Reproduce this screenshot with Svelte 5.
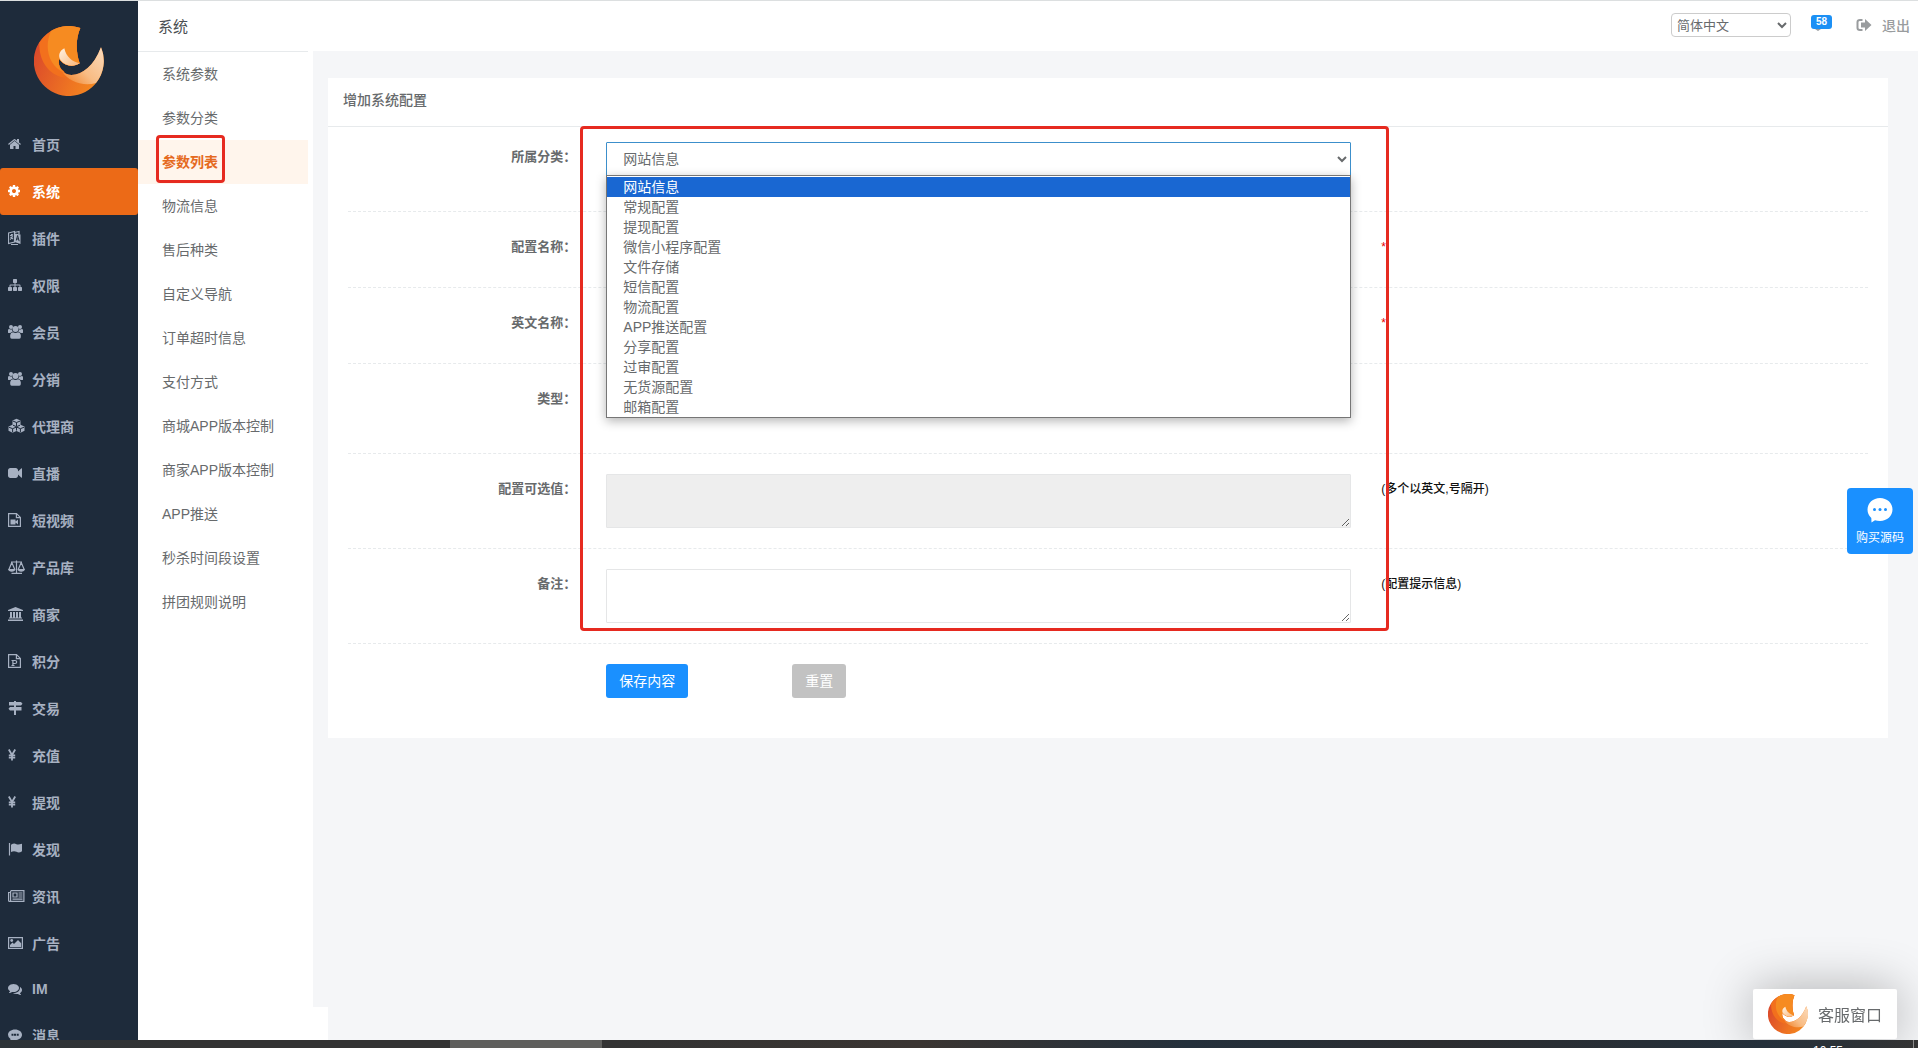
<script lang="ts">
  interface NavItem {
    icon: string;
    label: string;
  }

  const navItems: NavItem[] = [
    { icon: 'home', label: '首页' },
    { icon: 'cog', label: '系统' },
    { icon: 'language', label: '插件' },
    { icon: 'sitemap', label: '权限' },
    { icon: 'users', label: '会员' },
    { icon: 'users', label: '分销' },
    { icon: 'cubes', label: '代理商' },
    { icon: 'video', label: '直播' },
    { icon: 'fileVideo', label: '短视频' },
    { icon: 'balance', label: '产品库' },
    { icon: 'bank', label: '商家' },
    { icon: 'filePoint', label: '积分' },
    { icon: 'signs', label: '交易' },
    { icon: 'yen', label: '充值' },
    { icon: 'yen', label: '提现' },
    { icon: 'flag', label: '发现' },
    { icon: 'news', label: '资讯' },
    { icon: 'image', label: '广告' },
    { icon: 'comments', label: 'IM' },
    { icon: 'comment', label: '消息' }
  ];

  const subItems = [
    '系统参数',
    '参数分类',
    '参数列表',
    '物流信息',
    '售后种类',
    '自定义导航',
    '订单超时信息',
    '支付方式',
    '商城APP版本控制',
    '商家APP版本控制',
    'APP推送',
    '秒杀时间段设置',
    '拼团规则说明'
  ];

  const categories = [
    '网站信息',
    '常规配置',
    '提现配置',
    '微信小程序配置',
    '文件存储',
    '短信配置',
    '物流配置',
    'APP推送配置',
    '分享配置',
    '过审配置',
    '无货源配置',
    '邮箱配置'
  ];

  let activeNav = $state('系统');
  let activeSub = $state('参数列表');
  let category = $state('网站信息');
  let open = $state(true);

  function pick(name: string) {
    category = name;
    open = false;
  }
</script>

{#snippet logo(id: string)}
  <svg class="logo" viewBox="0 0 210 210" aria-hidden="true">
    <defs>
      <linearGradient id="{id}-base" x1="0" y1="0.4" x2="1" y2="0.8">
        <stop offset="0" stop-color="#db4a2b" />
        <stop offset="0.6" stop-color="#ee7422" />
        <stop offset="1" stop-color="#f68d1f" />
      </linearGradient>
      <linearGradient id="{id}-tail" x1="1" y1="0.1" x2="0.1" y2="0.9">
        <stop offset="0" stop-color="#fbd9b8" />
        <stop offset="0.6" stop-color="#f8bc84" />
        <stop offset="1" stop-color="#f28a35" />
      </linearGradient>
      <linearGradient id="{id}-inner" x1="0" y1="0" x2="1" y2="1">
        <stop offset="0" stop-color="#fff3e4" />
        <stop offset="1" stop-color="#f9b577" />
      </linearGradient>
    </defs>
    <path fill="url(#{id}-base)" d="M139 6A105 105 0 1 0 201 64C180 120 145 147 112 147C88 145 70 125 76 98C88 120 118 125 137 112C126 80 124 40 139 6Z" />
    <path fill="#f2701d" d="M139 6A105 105 0 0 0 16 50C14 110 50 152 98 156L90 136C74 126 72 110 76 98C88 120 118 125 137 112C126 80 124 40 139 6Z" />
    <path fill="#f68b21" d="M139 6A105 105 0 0 0 51 15C30 62 42 118 90 140C74 126 72 110 76 98C88 120 118 125 137 112C126 80 124 40 139 6Z" />
    <path fill="url(#{id}-tail)" d="M201 64A105 105 0 0 1 186 171C148 182 104 168 84 136C92 144 101 147 112 147C145 147 180 120 201 64Z" />
    <path fill="url(#{id}-inner)" d="M91 67C74 76 72 92 80 103C92 120 118 125 137 112C115 107 97 94 91 67Z" />
  </svg>
{/snippet}

{#snippet icon(name: string)}
  {#if name === 'home'}
    <svg class="icon" viewBox="64 -128 2304 2048"><path d="M1472 992v480q0 26-19 45t-45 19h-384v-384h-256v384h-384q-26 0-45-19t-19-45v-480q0-1 .5-3t.5-3l575-474 575 474q1 2 1 6zm223-69l-62 74q-8 9-21 11h-3q-13 0-21-7l-692-577-692 577q-12 8-24 7-13-2-21-11l-62-74q-8-10-7-23.500t11-21.500l719-599q32-26 76-26t76 26l244 204v-195q0-14 9-23t23-9h192q14 0 23 9t9 23v408l219 182q10 8 11 21.500t-7 23.500z" /></svg>
  {:else if name === 'cog'}
    <svg class="icon" viewBox="128 -128 2304 2048"><path d="M1152 896q0-106-75-181t-181-75-181 75-75 181 75 181 181 75 181-75 75-181zm512-109v222q0 12-8 23t-20 13l-185 28q-19 54-39 91 35 50 107 138 10 12 10 25t-9 23q-27 37-99 108t-94 71q-12 0-26-9l-138-108q-44 23-91 38-16 136-29 186-7 28-36 28h-222q-14 0-24.500-8.500t-11.500-21.500l-28-184q-49-16-90-37l-141 107q-10 9-25 9-14 0-25-11-126-114-165-168-7-10-7-23 0-12 8-23 15-21 51-66.500t54-70.500q-27-50-41-99l-183-27q-13-2-21-12.500t-8-23.500v-222q0-12 8-23t19-13l186-28q14-46 39-92-40-57-107-138-10-12-10-24 0-10 9-23 26-36 98.500-107.500t94.500-71.500q13 0 26 10l138 107q44-23 91-38 16-136 29-186 7-28 36-28h222q14 0 24.500 8.500t11.500 21.500l28 184q49 16 90 37l142-107q9-9 24-9 13 0 25 10 129 119 165 170 7 8 7 22 0 12-8 23-15 21-51 66.500t-54 70.500q26 50 41 98l183 28q13 2 21 12.500t8 23.500z" /></svg>
  {:else if name === 'language'}
    <svg class="icon" viewBox="0 0 18 16">
      <path d="M6.500 3.500L12.500 4.500v9.500L6.500 12z" />
      <path class="line" d="M.5 3L6.500 1.500v10.500L.5 13.500zM2 5.500l3-1M3.500 4v2M2 9.500c1.500-1 2.500-2.500 2.500-4M2.500 7l2.500 2M6.500 2.500L11 1.500v2.500M3 14.500h7" />
      <path class="cut" d="M8.300 10.500l1.300-5 1.600 5.700M8.700 8.800l2 .4" />
    </svg>
  {:else if name === 'sitemap'}
    <svg class="icon" viewBox="0 -128 2304 2048"><path d="M1792 1248v320q0 40-28 68t-68 28h-320q-40 0-68-28t-28-68v-320q0-40 28-68t68-28h96v-192h-512v192h96q40 0 68 28t28 68v320q0 40-28 68t-68 28h-320q-40 0-68-28t-28-68v-320q0-40 28-68t68-28h96v-192h-512v192h96q40 0 68 28t28 68v320q0 40-28 68t-68 28h-320q-40 0-68-28t-28-68v-320q0-40 28-68t68-28h96v-192q0-52 38-90t90-38h512v-192h-96q-40 0-68-28t-28-68v-320q0-40 28-68t68-28h320q40 0 68 28t28 68v320q0 40-28 68t-68 28h-96v192h512q52 0 90 38t38 90v192h96q40 0 68 28t28 68z" /></svg>
  {:else if name === 'users'}
    <svg class="icon" viewBox="0 0 18 16">
      <circle cx="3" cy="3" r="2" /><circle cx="12" cy="3" r="2" /><circle cx="7.500" cy="5" r="3" />
      <path d="M0 8.500V6.300Q0 5 1.200 5Q3 5.800 3.900 5.500Q4 7 4.800 7.800Q3 8 2.300 9H1Q0 9 0 8.500zM15 8.500V6.300Q15 5 13.800 5Q12 5.800 11.100 5.500Q11 7 10.200 7.800Q12 8 12.700 9H14Q15 9 15 8.500zM2.200 13.200V11Q2.600 8.300 5 8.300Q7.500 9.800 10 8.300Q12.400 8.300 12.800 11V13.200Q12.500 14.800 11 14.800H4Q2.500 14.800 2.200 13.200z" />
    </svg>
  {:else if name === 'cubes'}
    <svg class="icon" viewBox="0 0 18 16">
      <path d="M8.500.8l4 1.600v4.400l4 1.700v4.300l-4 2-4-1.900-4 1.900-4-2V8.500l4-1.700V2.400z" />
      <path class="cut" d="M4.800 3l3.700 1.500L12.300 3M8.500 4.500v3.800M.9 9.200l3.700 1.500 3.900-1.700 3.900 1.700 3.700-1.500M4.600 10.700v3.600M12.400 10.700v3.600M8.500 9v3.500M5 7.200l3.500 1.500L12 7.200" />
    </svg>
  {:else if name === 'video'}
    <svg class="icon" viewBox="0 -128 2304 2048"><path d="M1792 352v1088q0 42-39 59-13 5-25 5-27 0-45-19l-403-403v166q0 119-84.500 203.500t-203.500 84.500h-704q-119 0-203.500-84.500t-84.500-203.500v-704q0-119 84.500-203.500t203.500-84.500h704q119 0 203.500 84.500t84.500 203.500v165l403-402q18-19 45-19 12 0 25 5 39 17 39 59z" /></svg>
  {:else if name === 'fileVideo'}
    <svg class="icon" viewBox="0 0 18 16">
      <path class="line" d="M.6 1.600h7.900l3.900 3.800v9H.6zM8.400 1.600v4h4" />
      <path d="M2.500 7.500h5v2l2.500-2v5l-2.500-2v2h-5z" />
    </svg>
  {:else if name === 'balance'}
    <svg class="icon" viewBox="0 0 18 16">
      <path class="line" d="M3 3h11M8.500 1.500v12.800M3.500 14.400h10.500M3.800 3.500L.9 10.500M3.800 3.500l3 7M13.200 3.500l-3 7M13.200 3.500l3 7" />
      <path d="M0 10h7.500Q7 12.700 3.800 12.700Q.5 12.700 0 10zM9.500 10H17Q16.500 12.700 13.200 12.700Q10 12.700 9.500 10z" />
    </svg>
  {:else if name === 'bank'}
    <svg class="icon" viewBox="0 0 18 16"><path d="M7.500 1L15 4v1H0V4zM2 6h2v5.500h1V6h2v5.500h1V6h2v5.500h1V6h2v5.500h1v1H1v-1h1zM0 13.500h15V15H0z" /></svg>
  {:else if name === 'filePoint'}
    <svg class="icon" viewBox="0 0 18 16">
      <path class="line" d="M.6 1.600h7.900l3.900 3.800v9H.6zM8.400 1.600v4h4M3.500 7.500h3.500Q8.700 7.500 8.700 9T7 10.500H5M4.900 7.500v5M3.500 12.500h3" />
    </svg>
  {:else if name === 'signs'}
    <svg class="icon" viewBox="0 0 18 16"><path d="M6 1h2v1h5l1.500 1.800L13 5.500H8V7h5.500v3.500H8V15H6v-4.500H2L.5 8.700 2 7h4V5.500H1V2h5z" /></svg>
  {:else if name === 'yen'}
    <svg class="icon" viewBox="0 0 18 16"><path class="thick" d="M.8 2.500l3.200 5.500 3.200-5.500M4 8v5.500M.8 8.300h6.400M.8 10.700h6.400" /></svg>
  {:else if name === 'flag'}
    <svg class="icon" viewBox="0 0 18 16">
      <path class="line" d="M1.500 2v12.500" />
      <path d="M3 3.800Q6 1.800 8 3T14 2.700v7.500Q11 12.200 8.500 10.800T3 11z" />
    </svg>
  {:else if name === 'news'}
    <svg class="icon" viewBox="0 0 18 16">
      <path class="line" d="M2.600 2.600h13.300v10.800H1.600q-1 0-1-1.200V4.500h2M2.600 3v10M5 5h4v4H5zM10.500 5h4M10.500 7h4M10.500 9h4M4.500 11.200h10" />
    </svg>
  {:else if name === 'image'}
    <svg class="icon" viewBox="0 0 18 16">
      <path class="line" d="M.6 2.600h13.800v10.800H.6z" />
      <circle cx="3.700" cy="5.500" r="1.400" />
      <path d="M2 12V10l2.500-2.500L6 9l4-4 3.200 3.300V12z" />
    </svg>
  {:else if name === 'comments'}
    <svg class="icon" viewBox="0 -128 2304 2048"><path d="M1408 768q0 139-94 257t-256.500 186.500-353.500 68.500q-86 0-176-16-124 88-278 128-36 9-86 16h-3q-11 0-20.500-8t-11.500-21q-1-3-1-6.500t.5-6.500 2-6l2.500-5 3.500-5.500 4-5 4.500-5 4-4.500q5-6 23-25t26-29.500 22.500-29 25-38.500 20.500-44q-124-72-195-177t-71-224q0-139 94-257t256.500-186.500 353.500-68.500 353.500 68.500 256.500 186.500 94 257zm384 256q0 120-71 224.500t-195 176.500q10 24 20.500 44t25 38.500 22.500 29 26 29.500 23 25q1 1 4 4.500t4.500 5 4 5 3.500 5.500l2.500 5 2 6 .5 6.500-1 6.500q-3 14-13 22t-22 7q-50-7-86-16-154-40-278-128-90 16-176 16-271 0-472-132 58 4 88 4 161 0 309-45t264-129q125-92 192-212t67-254q0-77-23-152 129 71 204 178t75 230z" /></svg>
  {:else if name === 'comment'}
    <svg class="icon" viewBox="0 0 18 16">
      <path fill-rule="evenodd" d="M7 2.500c4 0 7 2.300 7 5.300s-3 5.300-7 5.300q-.8 0-1.500-.1Q3.500 14.600 1 15q1.300-1.300 1.500-3Q0 10.500 0 7.800c0-3 3-5.300 7-5.300zM3.500 6.800v2h2v-2zM6 6.800v2h2v-2zM8.700 6.800v2h2v-2z" />
    </svg>
  {/if}
{/snippet}

<div class="page">
  <div class="workspace">
    <aside class="sidebar">
      <a class="brand" href="#home" aria-label="首页">{@render logo('brand')}</a>
      <nav>
        {#each navItems as item}
          <a
            class="nav-item"
            class:active={item.label === activeNav}
            class:latin={item.label === 'IM'}
            href="#nav"
            onclick={() => (activeNav = item.label)}
          >
            {@render icon(item.icon)}
            <span>{item.label}</span>
          </a>
        {/each}
      </nav>
    </aside>

    <div class="content">
      <header class="topbar">
        <h1>系统</h1>
        <div class="tools">
          <select class="lang" aria-label="语言">
            <option>简体中文</option>
            <option>English</option>
          </select>
          <a class="messages" href="#messages">58</a>
          <a class="logout" href="#logout">
            <svg viewBox="0 0 16 14" aria-hidden="true">
              <path class="door" d="M6.500 2H4Q1.500 2 1.500 4v6Q1.500 12 4 12h2.500" />
              <path d="M5 4.500h4V1l6.500 6L9 13V9.500H5z" />
            </svg>
            退出
          </a>
        </div>
      </header>

      <div class="columns">
        <div class="subpanel">
          <nav class="subnav">
            {#each subItems as item}
              <a
                class="sub-item"
                class:active={item === activeSub}
                href="#sub"
                onclick={() => (activeSub = item)}
              >
                {item}
                {#if item === '参数列表'}
                  <span class="mark mark-menu"></span>
                {/if}
              </a>
            {/each}
          </nav>
          <div class="subfoot"></div>
        </div>

        <main>
          <section class="card">
            <h2>增加系统配置</h2>
            <form onsubmit={(e) => e.preventDefault()}>
              <div class="row first">
                <label for="category">所属分类：</label>
                <div class="control picker">
                  <select
                    id="category"
                    class="field focused"
                    bind:value={category}
                    onmousedown={(e) => {
                      e.preventDefault();
                      open = !open;
                    }}
                  >
                    {#each categories as name}
                      <option>{name}</option>
                    {/each}
                  </select>
                  {#if open}
                    <div class="options" role="listbox" aria-label="所属分类">
                      {#each categories as name}
                        <button
                          type="button"
                          role="option"
                          aria-selected={name === category}
                          class="option"
                          class:selected={name === category}
                          onclick={() => pick(name)}
                        >{name}</button>
                      {/each}
                    </div>
                  {/if}
                </div>
              </div>
              <div class="row">
                <label for="name">配置名称：</label>
                <div class="control"><input id="name" class="field" type="text" /></div>
                <span class="hint required">*</span>
              </div>
              <div class="row">
                <label for="key">英文名称：</label>
                <div class="control"><input id="key" class="field" type="text" /></div>
                <span class="hint required">*</span>
              </div>
              <div class="row tall">
                <label for="type">类型：</label>
                <div class="control">
                  <select id="type" class="field short"><option></option></select>
                </div>
              </div>
              <div class="row">
                <label for="values">配置可选值：</label>
                <div class="control"><textarea id="values" disabled></textarea></div>
                <span class="hint">(多个以英文,号隔开)</span>
              </div>
              <div class="row">
                <label for="remark">备注：</label>
                <div class="control"><textarea id="remark"></textarea></div>
                <span class="hint">(配置提示信息)</span>
              </div>
              <div class="row actions">
                <div class="control buttons">
                  <button class="btn save" type="submit">保存内容</button>
                  <button class="btn reset" type="reset">重置</button>
                </div>
              </div>
              <span class="mark mark-form"></span>
            </form>
          </section>
        </main>
      </div>
    </div>
  </div>

  <button class="buy" type="button">
    <svg viewBox="0 0 26 26" aria-hidden="true">
      <path fill="#fff" d="M13 1C20 1 25.500 6 25.500 12.500S20 24 13 24q-3 0-5-.7L4.500 25.500 4.300 21Q.5 17.500.5 12.500C.5 6 6 1 13 1z" />
      <circle cx="7.500" cy="12.500" r="1.500" /><circle cx="13" cy="12.500" r="1.500" /><circle cx="18.500" cy="12.500" r="1.500" />
    </svg>
    购买源码
  </button>

  <button class="service" type="button">
    {@render logo('service')}
    客服窗口
  </button>

  <footer class="taskbar">
    <span class="task"></span>
    <time>10:55</time>
  </footer>
</div>

<style>
  :global(body) {
    margin: 0;
    background: #f5f6f8;
  }

  .page {
    display: flex;
    flex-direction: column;
    box-sizing: border-box;
    height: 100vh;
    overflow: hidden;
    border-top: 1px solid #dcdfe0;
    font-family: "Liberation Sans", "Noto Sans CJK SC", sans-serif;
    font-size: 14px;
    color: #676a6c;
  }

  .page :is(input, select, textarea, button) {
    box-sizing: border-box;
    margin: 0;
    font-family: inherit;
    color: inherit;
  }

  a {
    color: inherit;
    text-decoration: none;
  }

  .workspace {
    display: flex;
    flex: 1;
    min-height: 0;
  }

  .sidebar {
    flex: 0 0 138px;
    overflow: hidden;
    background: #1e2b3b;
    color: #a7b1c2;
  }

  .brand {
    display: flex;
    justify-content: center;
    padding: 25px 0;
  }

  .logo {
    display: block;
    flex: none;
  }

  .brand .logo {
    width: 70px;
    height: 70px;
  }

  .nav-item {
    display: flex;
    align-items: center;
    gap: 6px;
    box-sizing: border-box;
    height: 47px;
    padding: 0 0 2px 8px;
    font-weight: 600;
    border-radius: 3px;
  }

  .nav-item.latin {
    height: 45px;
  }

  .nav-item.active {
    background: #ec6a17;
    color: #fff;
  }

  .icon {
    flex: none;
    width: 18px;
    height: 16px;
    fill: currentColor;
  }

  .icon .line,
  .icon .thick {
    fill: none;
    stroke: currentColor;
    stroke-width: 1.2;
  }

  .icon .thick {
    stroke-width: 1.8;
  }

  .icon .cut {
    fill: none;
    stroke: #1e2b3b;
    stroke-width: 1;
  }

  .content {
    display: flex;
    flex-direction: column;
    flex: 1;
    min-width: 0;
  }

  .topbar {
    display: flex;
    flex: none;
    align-items: center;
    justify-content: space-between;
    box-sizing: border-box;
    height: 50px;
    padding: 0 8px 2px 20px;
    background: #fff;
  }

  h1,
  h2 {
    margin: 0;
    font-weight: 400;
  }

  h1 {
    font-size: 15px;
    color: #4b4f52;
  }

  .tools {
    display: flex;
    align-items: center;
  }

  .lang {
    width: 120px;
    height: 24px;
    padding: 0 1px;
    border: 1px solid #ccc;
    border-radius: 4px;
    background: #fff;
    font-size: 13px;
  }

  .messages {
    position: relative;
    width: 21px;
    height: 14px;
    margin: 0 24px 6px 20px;
    border-radius: 3px;
    background: #1c90f5;
    color: #fff;
    font-size: 10px;
    font-weight: 700;
    line-height: 14px;
    text-align: center;
  }

  .messages::after {
    content: '';
    position: absolute;
    left: 4px;
    top: 14px;
    border: 3px solid transparent;
    border-top: 2px solid #999c9e;
  }

  .logout {
    display: flex;
    align-items: center;
    gap: 10px;
    color: #999c9e;
    font-weight: 500;
  }

  .logout svg {
    width: 16px;
    height: 14px;
    fill: currentColor;
  }

  .logout .door {
    fill: none;
    stroke: currentColor;
    stroke-width: 2;
  }

  .columns {
    display: flex;
    flex: 1;
    min-height: 0;
  }

  .subpanel {
    display: flex;
    flex-direction: column;
    flex: 0 0 190px;
  }

  .subnav {
    flex: 1;
    width: 175px;
    background: #fff;
  }

  .subnav::before {
    content: '';
    display: block;
    width: 170px;
    border-top: 1px solid #e7eaec;
  }

  .sub-item {
    position: relative;
    display: block;
    width: 146px;
    padding-left: 24px;
    line-height: 44px;
  }

  .sub-item.active {
    background: #fff5ec;
    color: #e56a1f;
    font-weight: 600;
  }

  .subfoot {
    height: 33px;
    background: #fff;
  }

  .mark {
    position: absolute;
    border: 3px solid #e62a20;
    border-radius: 4px;
    pointer-events: none;
  }

  .mark-menu {
    left: 18px;
    top: -5px;
    width: 63px;
    height: 42px;
  }

  main {
    flex: 1;
    min-width: 0;
    padding: 27px 30px 0 0;
  }

  .card {
    background: #fff;
  }

  h2 {
    padding: 0 15px 4px;
    border-bottom: 1px solid #e7eaec;
    font-size: 14px;
    line-height: 44px;
    font-weight: 500;
  }

  form {
    position: relative;
    padding: 0 20px;
  }

  .row {
    display: grid;
    grid-template-columns: 2fr 6fr 4fr;
    position: relative;
    padding: 20px 0;
    margin: 0 -15px;
  }

  .row:not(.actions)::after {
    content: '';
    position: absolute;
    left: 15px;
    right: 15px;
    bottom: 0;
    border-bottom: 1px dashed #e7eaec;
  }

  .row:not(.actions) {
    padding-bottom: 21px;
  }

  .row.first:not(.actions) {
    padding-top: 15px;
    padding-bottom: 35px;
    z-index: 2;
  }

  .row.tall:not(.actions) {
    padding-bottom: 40px;
  }

  label {
    padding-right: 15px;
    font-size: 13px;
    font-weight: 600;
    line-height: 30px;
    text-align: right;
  }

  .control {
    display: flex;
    flex-direction: column;
    min-width: 0;
    padding: 0 15px;
  }

  .field {
    width: 100%;
    height: 35px;
    padding: 0 12px 2px;
    border: 1px solid #e5e6e7;
    border-radius: 1px;
    background: #fff;
    font-size: 14px;
  }

  .field.short {
    height: 30px;
  }

  .field.focused {
    border-color: #3c8fcb;
    outline: none;
  }

  textarea {
    width: 100%;
    height: 54px;
    border: 1px solid #e5e6e7;
    border-radius: 1px;
    background: #fff;
  }

  textarea:disabled {
    background: #eee;
  }

  .picker {
    position: relative;
    z-index: 2;
  }

  .options {
    position: absolute;
    top: 33px;
    left: 15px;
    right: 15px;
    padding-top: 1px;
    border: 1px solid #767676;
    background: #fff;
    box-shadow: 0 3px 10px rgba(0, 0, 0, 0.3);
  }

  .page .option {
    display: block;
    width: 100%;
    height: 20px;
    padding: 0 16px;
    border: 0;
    background: none;
    font-size: 14px;
    line-height: 20px;
    text-align: left;
  }

  .page .option.selected {
    background: #1967d2;
    color: #fff;
  }

  .hint {
    padding-left: 15px;
    font-size: 12px;
    font-weight: 500;
    line-height: 30px;
    color: #111;
  }

  .required {
    color: #e60000;
  }

  .row.actions {
    padding-bottom: 40px;
  }

  .buttons {
    grid-column: 2;
    flex-direction: row;
    gap: 104px;
  }

  .page .btn {
    height: 34px;
    padding: 0 13px 2px;
    border: 0;
    border-radius: 3px;
    font-size: 14px;
    color: #fff;
  }

  .save {
    background: #1a90ff;
  }

  .reset {
    background: #c2c2c2;
  }

  .mark-form {
    z-index: 3;
    top: -1px;
    bottom: 107px;
    left: calc(100% / 6 - 8px);
    right: calc(100% / 3 - 21px);
  }

  .page .buy {
    position: fixed;
    right: 5px;
    top: 488px;
    z-index: 4;
    display: flex;
    flex-direction: column;
    align-items: center;
    gap: 6px;
    width: 66px;
    height: 66px;
    padding: 9px 0 0;
    border: 0;
    border-radius: 4px;
    background: #1a90ff;
    color: #fff;
    font-size: 12px;
    line-height: 18px;
  }

  .buy svg {
    flex: none;
    width: 26px;
    height: 26px;
    fill: #1a90ff;
  }

  .page .service {
    position: fixed;
    right: 21px;
    bottom: 9px;
    z-index: 4;
    display: flex;
    align-items: center;
    gap: 10px;
    height: 50px;
    padding: 0 15px;
    border: 0;
    border-radius: 2px;
    background: #fff;
    box-shadow: 0 0 50px rgba(0, 0, 0, 0.3);
    font-size: 16px;
  }

  .service .logo {
    width: 40px;
    height: 40px;
  }

  .taskbar {
    position: relative;
    z-index: 5;
    display: flex;
    flex: none;
    justify-content: space-between;
    box-sizing: border-box;
    height: 8px;
    padding: 0 75px 0 450px;
    overflow: hidden;
    background: linear-gradient(90deg, #2d3338, #333 10%, #333 32%, #3a3532 48%, #24303b 62%, #2c2d30 75%, #24303b 92%, #333);
    color: #fff;
  }

  .taskbar::after {
    content: '';
    position: absolute;
    top: 0;
    right: 4px;
    height: 8px;
    border-left: 1px solid #8a8a8a;
  }

  .task {
    width: 152px;
    background: #5f5f5d;
  }

  .taskbar time {
    padding-top: 3px;
    font-size: 12px;
    line-height: 16px;
  }
</style>
